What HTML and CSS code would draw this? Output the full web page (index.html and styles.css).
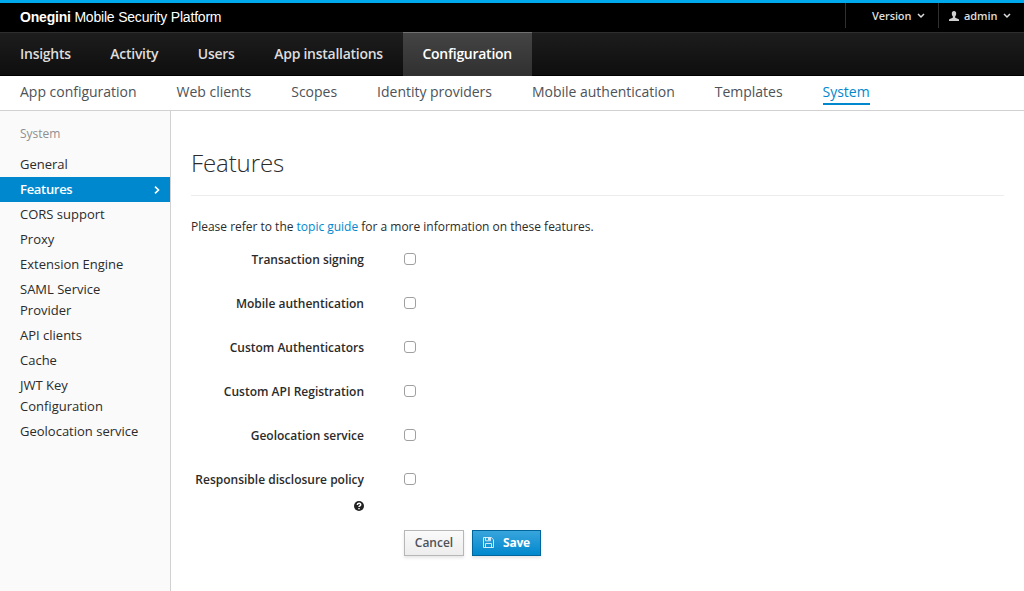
FILE: index.html
```html
<!DOCTYPE html>
<html lang="en">
<head>
<meta charset="utf-8">
<title>Onegini Mobile Security Platform</title>
<link rel="stylesheet" href="styles.css">
</head>
<body>
<header class="topbar">
  <div class="brand"><b>Onegini</b> Mobile Security Platform</div>
  <div class="utilities">
    <div class="utility version"><span class="version-text">Version</span><svg class="caret" viewBox="0 0 8 6"><path d="M1 1l3 3 3-3"/></svg></div>
    <div class="utility user"><svg class="person" viewBox="0 0 11 11"><path d="M5.5 0C3.900 0 3.100 1.100 3.100 2.700c0 1.500.5 2.600 1.200 3.300v1.100C3.800 8 .5 8.100 0 9.400V11h11V9.400C10.500 8.100 7.200 8 6.700 7.100V6c.7-.7 1.200-1.800 1.200-3.300C7.900 1.100 7.100 0 5.500 0z"/></svg><span class="admin-text">admin</span><svg class="caret" viewBox="0 0 8 6"><path d="M1 1l3 3 3-3"/></svg></div>
  </div>
</header>
<nav class="primary">
  <a class="tab insights">Insights</a><a class="tab activity">Activity</a><a class="tab users">Users</a><a class="tab installs">App installations</a><a class="tab active">Configuration</a>
</nav>
<nav class="secondary">
  <a>App configuration</a><a>Web clients</a><a>Scopes</a><a>Identity providers</a><a>Mobile authentication</a><a>Templates</a><a class="current">System</a>
</nav>
<div class="page">
  <aside class="sidebar">
    <div class="heading">System</div>
    <a>General</a>
    <a class="selected"><span>Features</span><svg class="arrow" viewBox="0 0 6 8"><path d="M1 .7L4.500 4 1 7.300"/></svg></a>
    <a>CORS support</a>
    <a>Proxy</a>
    <a>Extension Engine</a>
    <a>SAML Service<br>Provider</a>
    <a>API clients</a>
    <a>Cache</a>
    <a>JWT Key<br>Configuration</a>
    <a>Geolocation service</a>
  </aside>
  <main class="content">
    <h1>Features</h1>
    <p>Please refer to the <a class="link">topic guide</a> for a more information on these features.</p>
    <form>
      <div class="row"><label for="f1">Transaction signing</label><input id="f1" class="check" type="checkbox"></div>
      <div class="row"><label for="f2">Mobile authentication</label><input id="f2" class="check" type="checkbox"></div>
      <div class="row"><label for="f3">Custom Authenticators</label><input id="f3" class="check" type="checkbox"></div>
      <div class="row"><label for="f4">Custom API Registration</label><input id="f4" class="check" type="checkbox"></div>
      <div class="row"><label for="f5">Geolocation service</label><input id="f5" class="check" type="checkbox"></div>
      <div class="row last"><label for="f6">Responsible disclosure policy<svg class="help" viewBox="0 0 10 10"><circle cx="5" cy="5" r="5"/><path d="M3.300 3.900C3.300 1.700 6.700 1.700 6.700 3.700 6.700 4.900 5 4.800 5 6"/><path d="M5 7v1.200"/></svg></label><input id="f6" class="check" type="checkbox"></div>
      <div class="actions">
        <button type="button" class="btn cancel">Cancel</button>
        <button type="button" class="btn save"><svg class="disk" viewBox="0 0 11 11"><path d="M.5.5h7.800l2.200 2.200v7.800H.5z"/><path d="M2.500.5v3.300h5V.5M2.500 10.500V6.500h6v4"/><path d="M5.500 1v2h1V1z"/></svg><span>Save</span></button>
      </div>
    </form>
  </main>
</div>
</body>
</html>
```
FILE: styles.css
```css
* { box-sizing: border-box; }
body {
  margin: 0;
  height: 591px;
  display: flex;
  flex-direction: column;
  overflow: hidden;
  background: #fff;
  color: #2b2b2b;
  font: 12px/20px "Open Sans", sans-serif;
}
svg { flex: none; }
.topbar {
  height: 32px;
  flex: none;
  display: flex;
  justify-content: space-between;
  background: #000;
  border-top: 3px solid #00a8ec;
  color: #fff;
}
.brand {
  padding: 4px 0 0 20px;
  font: 14px/20px "Liberation Sans", Arial, sans-serif;
  letter-spacing: -.2px;
  white-space: nowrap;
}
.utilities { display: flex; }
.utility {
  height: 25px;
  display: flex;
  align-items: center;
  border-left: 1px solid #303030;
  color: #ddd;
  font-size: 11px;
  font-weight: 600;
}
.version { width: 93px; padding-left: 26px; }
.user { width: 86px; padding-left: 10px; }
.caret {
  width: 8px;
  height: 6px;
  margin-left: 6px;
  fill: none;
  stroke: #ddd;
  stroke-width: 1.5;
}
.version-text { letter-spacing: -.1px; }
.person { width: 10px; height: 10px; fill: #d0d0d0; }
.admin-text { margin-left: 5px; letter-spacing: -.1px; }
.primary {
  height: 44px;
  flex: none;
  display: flex;
  border-top: 1px solid #2e2e2e;
  border-bottom: 1px solid #000;
  background: linear-gradient(#1d1d1d, #0e0e0e);
}
.tab {
  padding: 0 19.8px;
  color: #ddd;
  font-size: 14px;
  font-weight: 600;
  letter-spacing: -.27px;
  line-height: 42px;
  white-space: nowrap;
}
.tab.insights { padding-left: 20px; }
.tab.active {
  height: 44px;
  margin-top: -1px;
  border-top: 1px solid #707070;
  background: linear-gradient(#444, #303030);
  color: #fff;
}
.secondary {
  height: 35px;
  flex: none;
  display: flex;
  gap: 40px;
  padding-left: 20px;
  border-bottom: 1px solid #d1d1d1;
  color: #4d5258;
  font-size: 14px;
  letter-spacing: -.015px;
  line-height: 20px;
  white-space: nowrap;
}
.secondary a { height: 29px; padding-top: 6px; }
.secondary .current { color: #0088ce; border-bottom: 2px solid #0088ce; }
.page { flex: 1; display: flex; }
.sidebar {
  width: 171px;
  flex: none;
  padding-top: 11px;
  border-right: 1px solid #d1d1d1;
  background: #fafafa;
  font-size: 13px;
  line-height: 21px;
}
.heading { height: 30px; padding: 1px 20px; color: #8f8f8f; font-size: 12px; }
.sidebar a { display: block; padding: 2px 20px; }
.sidebar .selected {
  display: flex;
  align-items: center;
  justify-content: space-between;
  padding-right: 10px;
  background: #0088ce;
  color: #fff;
  font-weight: 600;
  letter-spacing: -.3px;
}
.arrow { width: 6px; height: 8px; fill: none; stroke: #fff; stroke-width: 1.6; }
.content { flex: 1; padding: 0 20px; }
h1 {
  height: 85px;
  margin: 0;
  padding-top: 35px;
  border-bottom: 1px solid #ededed;
  font-size: 24px;
  font-weight: 300;
  letter-spacing: -.1px;
  line-height: 34px;
}
p { margin: 21px 0 0; letter-spacing: -.01px; }
.link { color: #0088ce; }
.row {
  height: 44px;
  display: grid;
  grid-template-columns: 173px 12px;
  column-gap: 40px;
  align-items: start;
}
form { padding-top: 13px; }
.row label { text-align: right; font-weight: 600; white-space: nowrap; }
.check {
  appearance: none;
  width: 12px;
  height: 12px;
  margin: 3px 0 0;
  border: 1px solid #a0a0a0;
  border-radius: 3px;
  background: #fff;
}
.last { height: 60px; }
.help { display: block; width: 10px; height: 10px; margin: 11px 0 0 auto; }
.help circle { fill: #222; }
.help path { fill: none; stroke: #fff; stroke-width: 1.5; }
.actions { display: flex; gap: 8px; padding: 0 0 0 213px; }
.btn {
  height: 26px;
  display: flex;
  align-items: center;
  justify-content: center;
  padding: 0;
  border: 1px solid #b7b7b7;
  box-shadow: 0 2px 3px rgba(0, 0, 0, .1);
  font: 600 12px/20px "Open Sans", sans-serif;
}
.cancel { width: 60px; background: linear-gradient(#fafafa, #ededed); color: #4d5258; }
.save {
  width: 69px;
  gap: 9px;
  border-color: #00659c;
  background: linear-gradient(#39a5dc, #0088ce);
  color: #fff;
  font-weight: 700;
  letter-spacing: -.2px;
}
.disk { width: 11px; height: 11px; margin-top: -1px; fill: none; stroke: #e3f3fb; stroke-width: .9; }
```
